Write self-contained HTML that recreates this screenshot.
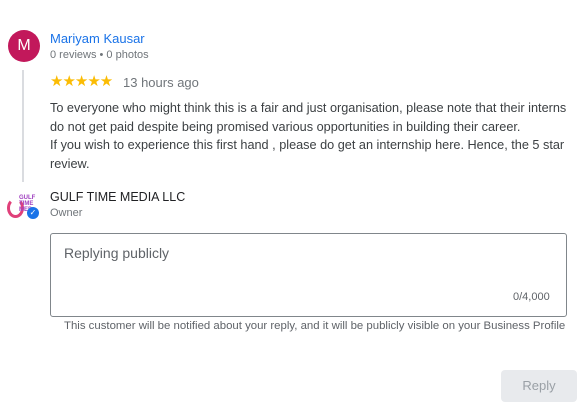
<!DOCTYPE html>
<html><head><style>
body{margin:0;width:585px;height:408px;background:#fff;font-family:"Liberation Sans",Arial,sans-serif;position:relative;overflow:hidden}
.a{position:absolute}
</style></head><body>
<div class="a" style="left:8px;top:30px;width:32px;height:32px;border-radius:50%;background:#c2185b;color:#fff;font-size:16px;line-height:32px;text-align:center">M</div>
<div class="a" style="left:50px;top:31px;font-size:13px;color:#1a73e8">Mariyam Kausar</div>
<div class="a" style="left:50px;top:49px;font-size:11px;color:#70757a">0 reviews • 0 photos</div>
<div class="a" style="left:22px;top:70px;width:2px;height:112px;background:#dadce0"></div>
<div class="a" style="left:50px;top:72px;font-size:15px;color:#fbbc04;letter-spacing:-1px">★★★★★</div>
<div class="a" style="left:123px;top:75px;font-size:13px;color:#70757a">13 hours ago</div>
<div class="a" style="left:50px;top:99px;width:520px;font-size:12.7px;line-height:18.5px;color:#3c4043">To everyone who might think this is a fair and just organisation, please note that their interns do not get paid despite being promised various opportunities in building their career.<br>If you wish to experience this first hand , please do get an internship here. Hence, the 5 star review.</div>
<div class="a" style="left:7px;top:194px;width:30px;height:24px">
<div class="a" style="left:0;top:4px;width:11px;height:14px;border-radius:50%;border:3px solid #e0407a;border-top-color:transparent"></div>
<div class="a" style="left:12px;top:1px;font-size:6px;line-height:6px;color:#a040c0;font-weight:bold">GULF<br>TIME<br>MED</div>
<div class="a" style="left:20px;top:13px;width:12px;height:12px;border-radius:50%;background:#1a73e8;color:#fff;font-size:8px;line-height:12px;text-align:center">✓</div>
</div>
<div class="a" style="left:50px;top:190px;font-size:12.5px;color:#202124">GULF TIME MEDIA LLC</div>
<div class="a" style="left:50px;top:207px;font-size:11px;color:#70757a">Owner</div>
<div class="a" style="left:50px;top:233px;width:515px;height:82px;border:1px solid #80868b;border-radius:3px"></div>
<div class="a" style="left:64px;top:245px;font-size:14px;color:#5f6368">Replying publicly</div>
<div class="a" style="left:513px;top:291px;font-size:11px;color:#5f6368">0/4,000</div>
<div class="a" style="left:64px;top:320px;font-size:11.4px;color:#5f6368">This customer will be notified about your reply, and it will be publicly visible on your Business Profile</div>
<div class="a" style="left:501px;top:370px;width:76px;height:32px;border-radius:4px;background:#e8eaed;color:#9aa0a6;font-size:13px;line-height:32px;text-align:center">Reply</div>
</body></html>
